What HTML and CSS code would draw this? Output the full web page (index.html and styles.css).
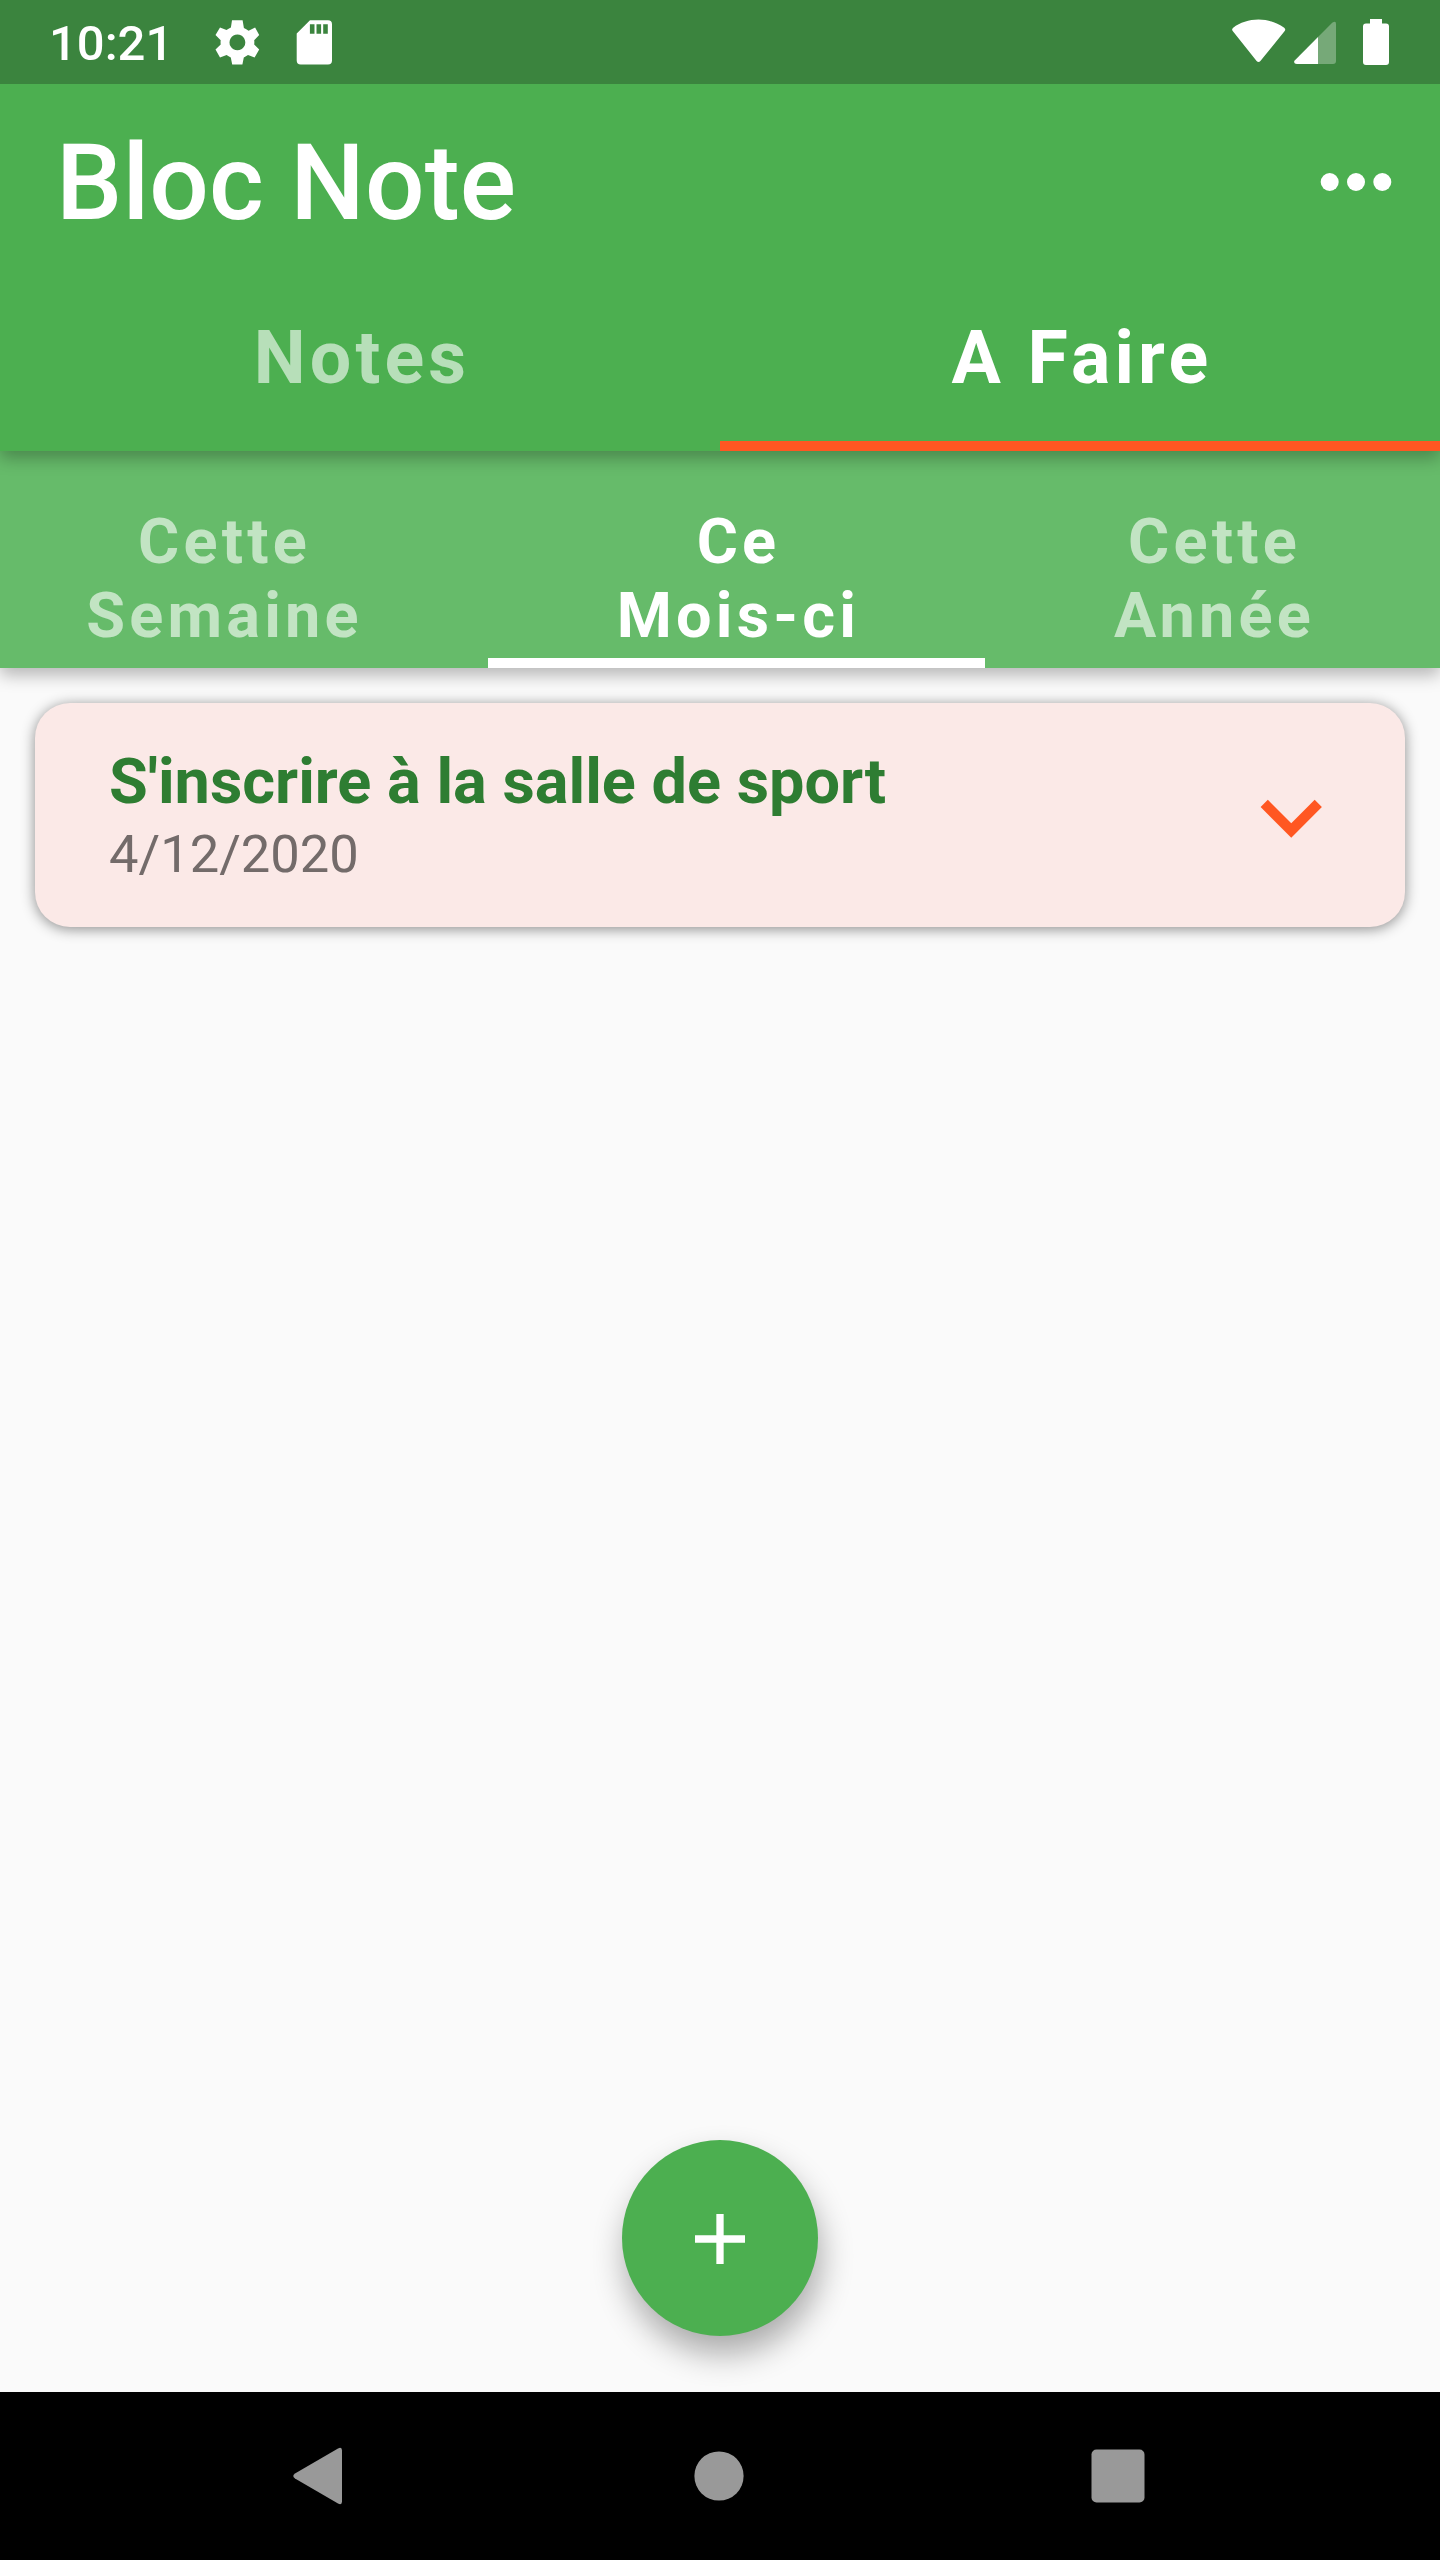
FILE: index.html
```html
<!DOCTYPE html>
<html lang="fr">
<head>
<meta charset="utf-8">
<title>Bloc Note</title>
<link rel="stylesheet" href="styles.css">
</head>
<body>
<div class="screen">
  <header class="app-bar">
    <div class="status-bar">
      <span class="clock">10:21</span>
      <svg class="status-left" width="120" height="84" viewBox="213 0 120 84" fill="#fff">
        <path fill-rule="evenodd" d="M232 20.2h10.600l1.300 7.800q2.400 1 4.700 2.700l6.500-3.300 4.100 7.600-5 5.200q.3 2.100 0 4.200l5 5-4.600 8.200-6.600-2.500q-2 1.500-4.200 2.400l-1.400 7h-10.200l-1.400-7q-2.300-.9-4.200-2.400l-6.600 2.500-4.500-8.200 5.200-5q-.3-2.100 0-4.200l-5.200-5.200 4.500-7.600 6.500 2.700q2-1.500 4.400-2.500zM237.400 34.500a7.900 7.900 0 1 0 .01 0z"/>
        <path fill-rule="evenodd" d="M310 20.200h18q4 0 4 4v36.300q0 4-4 4h-27.300q-4 0-4-4V33.500zM309.900 24.300v9.500h4.600v-9.500zM316.500 24.300v9.500h4.600v-9.500zM323.200 24.300v9.500h4.600v-9.500z"/>
      </svg>
      <svg class="status-right" width="164" height="84" viewBox="1228 0 164 84" fill="#fff">
        <path d="M1232.700 31q-1.400-1.700.5-3.300C1240 22.500 1249 19.500 1258.500 19.500s18 3 25.700 8.200q1.800 1.600.5 3.300L1260.400 61q-1.900 2-3.800 0z"/>
        <path d="M1332.200 22.800q3.800-2.300 3.800 1V61q0 3-3 3h-15V37z" opacity=".3"/>
        <path d="M1318 37v27h-21q-3.300 0-2.800-3z"/>
        <path d="M1370 19h12v4.500h4q3 0 3 3V62q0 3-3 3h-20q-3 0-3-3V26.500q0-3 3-3h4z"/>
      </svg>
    </div>
    <div class="toolbar">
      <h1 class="title">Bloc Note</h1>
      <svg width="72" height="20" viewBox="0 0 72 20" fill="#fff"><circle cx="9.700" cy="10" r="9"/><circle cx="36" cy="10" r="9"/><circle cx="62.300" cy="10" r="9"/></svg>
    </div>
    <nav class="tabs">
      <div class="tab">Notes</div>
      <div class="tab tab-active">A Faire</div>
    </nav>
  </header>
  <nav class="period-bar">
    <div class="period">Cette<br>Semaine</div>
    <div class="period period-active">Ce<br>Mois-ci</div>
    <div class="period">Cette<br>Année</div>
  </nav>
  <main class="content">
    <article class="card">
      <div>
        <div class="card-title">S'inscrire à la salle de sport</div>
        <div class="card-date">4/12/2020</div>
      </div>
      <svg class="chevron" viewBox="0 0 24 24" fill="#ff5722"><path d="M16.590 8.590 12 13.170 7.410 8.590 6 10l6 6 6-6z"/></svg>
    </article>
    <button class="fab" aria-label="Ajouter"><svg width="50" height="50" viewBox="0 0 50 50"><path d="M25 0v50M0 25h50" stroke="#fff" stroke-width="7.300"/></svg></button>
  </main>
  <footer class="nav-bar">
    <svg width="50" height="58" viewBox="0 0 50 58" fill="#999"><path d="M45 1.500q4-2 4 2v51q0 4-4 2L2 31.500q-3.500-2.500 0-5z"/></svg>
    <svg class="nav-home" width="50" height="50" viewBox="0 0 50 50" fill="#999"><circle cx="25" cy="25" r="24.600"/></svg>
    <svg width="54" height="54" viewBox="0 0 54 54" fill="#999"><rect x=".5" y=".500" width="53" height="53" rx="5"/></svg>
  </footer>
</div>
</body>
</html>
```
FILE: styles.css
```css
* { box-sizing: border-box; }
body { margin: 0; font-family: Roboto, "Liberation Sans", sans-serif; }
svg { display: block; flex: none; }
.screen {
  width: 1440px;
  height: 2560px;
  display: flex;
  flex-direction: column;
  background: #fafafa;
  overflow: hidden;
}
.app-bar {
  position: relative;
  z-index: 2;
  height: 451.400px;
  background: #4caf50;
  color: #fff;
  box-shadow: 0 7px 16px rgba(0, 0, 0, .28);
}
.status-bar {
  height: 84px;
  background: #3b843e;
  display: flex;
  align-items: center;
  padding: 0 48px 0 49px;
}
.clock { width: 164px; font-size: 49px; font-weight: 500; line-height: 84px; padding-top: 4px; }
.status-right { margin-left: auto; }
.toolbar {
  height: 196px;
  padding: 0 48px 0 56px;
  display: flex;
  align-items: center;
  justify-content: space-between;
}
.title { margin: 0; padding-top: 4px; font-size: 105px; font-weight: 500; line-height: 124px; letter-spacing: .150px; }
.tabs { display: flex; height: 171.400px; }
.tab {
  flex: 1;
  padding-top: 36px;
  padding-left: 4px;
  font-size: 73.500px;
  line-height: 84px;
  font-weight: 700;
  letter-spacing: 4.200px;
  text-align: center;
  color: rgba(255, 255, 255, .6);
}
.tab-active { color: #fff; border-bottom: 10px solid #ff5722; }
.period-bar {
  position: relative;
  z-index: 1;
  height: 217px;
  display: grid;
  grid-template-columns: 488px 497px 455px;
  background: #66bb6a;
  box-shadow: 0 7px 16px rgba(0, 0, 0, .28);
}
.period {
  padding-top: 54px;
  padding-right: 39px;
  font-size: 63px;
  line-height: 73.500px;
  font-weight: 700;
  letter-spacing: 4.200px;
  text-align: center;
  color: rgba(255, 255, 255, .6);
}
.period:last-child { padding: 54px 0 0 4px; }
.period-active { padding: 54px 0 0 4px; color: #fff; border-bottom: 10px solid #fff; }
.content {
  flex: 1;
  display: flex;
  flex-direction: column;
  align-items: center;
  justify-content: space-between;
  padding: 35px 35px 56px;
}
.card {
  width: 100%;
  height: 224px;
  padding: 3px 53px 0 74px;
  display: flex;
  align-items: center;
  justify-content: space-between;
  border-radius: 35px;
  background: #fbe9e7;
  box-shadow: 0 2px 14px rgba(0, 0, 0, .45);
}
.card-title { font-size: 63px; line-height: 74px; font-weight: 700; color: #2e7d32; }
.card-date { font-size: 52.500px; line-height: 70px; color: #736b6a; }
.chevron { width: 122.500px; height: 122.500px; }
.fab {
  width: 196px;
  height: 196px;
  border: 0;
  padding: 1px 0 0;
  border-radius: 50%;
  background: #4caf50;
  display: grid;
  place-items: center;
  box-shadow: 3px 18px 32px rgba(0, 0, 0, .32);
}
.nav-bar {
  height: 168px;
  background: #000;
  display: flex;
  align-items: center;
  justify-content: space-between;
  padding: 0 295px 0 293px;
}
.nav-home { margin-left: 4px; }
```
